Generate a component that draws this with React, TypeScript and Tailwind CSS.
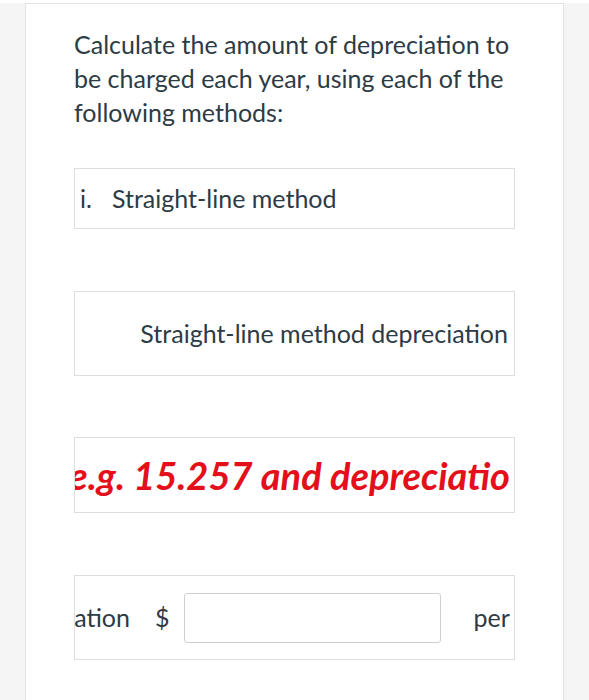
import React from 'react';

const App = () => {
    return (
        <div className="min-h-[700px] w-[589px] bg-[#f5f5f5] font-['Lato',sans-serif] text-[#2d3b45]">
            <div className="mx-[25px] min-h-[700px] border-x border-t border-[#e2e2e2] bg-white mt-[3px] px-[48px] pt-[23px]">
                {/* Question text */}
                <p className="text-[25px] leading-[34px]">
                    Calculate the amount of depreciation to be charged each year, using each of the following methods:
                </p>

                {/* i. Straight-line method */}
                <div className="mt-[39px] flex h-[61px] items-center border border-[#dedede] pl-[5px]">
                    <span className="w-[32px] text-[25px]">i.</span>
                    <span className="text-[25px]">Straight-line method</span>
                </div>

                {/* Label row */}
                <div className="mt-[62px] flex h-[85px] items-center justify-end border border-[#dedede] pr-[6px]">
                    <span className="whitespace-nowrap text-[25px]">Straight-line method depreciation</span>
                </div>

                {/* Red hint */}
                <div className="mt-[61px] flex h-[76px] items-center justify-end overflow-hidden border border-[#dedede] pr-[4px]">
                    <span className="whitespace-nowrap text-[38px] font-bold italic text-[#e3101b]">
                        e.g. 15.257 and depreciatio<span className="inline-block w-0 overflow-hidden align-bottom">n</span>
                    </span>
                </div>

                {/* Answer row */}
                <div className="mt-[62px] flex h-[85px] items-center overflow-hidden border border-[#dedede]">
                    <div className="flex w-[55px] shrink-0 justify-end overflow-hidden">
                        <span className="whitespace-nowrap text-[25px]">depreciation</span>
                    </div>
                    <span className="ml-[25px] text-[25px]">$</span>
                    <input type="text" className="ml-[14px] h-[50px] w-[257px] shrink-0 rounded-[3px] border border-[#cfcfcf] bg-white" />
                    <span className="ml-[33px] whitespace-nowrap text-[25px]">per year</span>
                </div>
            </div>
        </div>
    );
};

export default App;
